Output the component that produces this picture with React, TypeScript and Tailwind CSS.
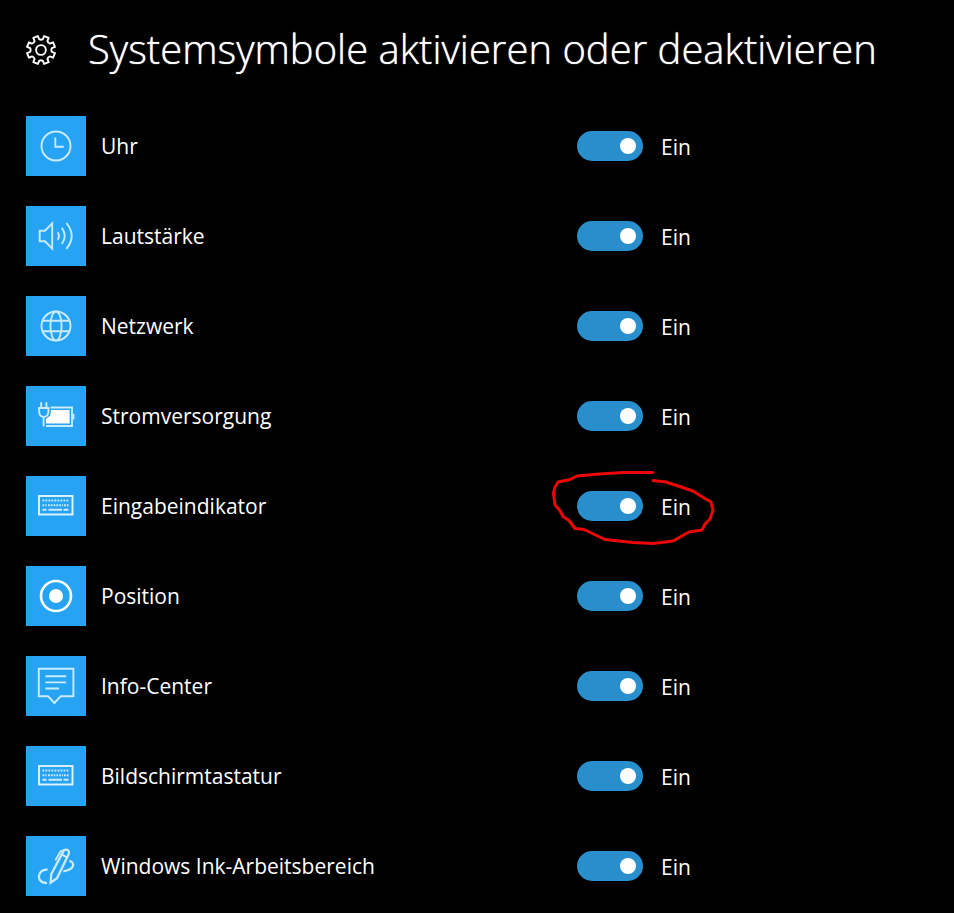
import React, { useState } from "react";

type IconProps = {
  children: React.ReactNode;
};

type SystemIcon = {
  id: string;
  label: string;
  icon: React.ReactNode;
  marked?: boolean;
};

// All tile icons share a 60x60 canvas
function TileIcon({ children }: IconProps) {
  return (
    <svg
      viewBox="0 0 60 60"
      className="size-full"
      fill="none"
      stroke="#c9ebff"
      strokeWidth="1.9"
      aria-hidden="true"
    >
      {children}
    </svg>
  );
}

function GearIcon() {
  // 8 teeth, the first one half a step away from the top
  const points: string[] = [];
  const polar = (radius: number, deg: number) => {
    const rad = ((deg - 90) * Math.PI) / 180;
    const x = 15 + radius * Math.cos(rad);
    const y = 15 + radius * Math.sin(rad);
    return `${x.toFixed(2)} ${y.toFixed(2)}`;
  };
  for (let i = 0; i < 8; i++) {
    const a = 22.5 + i * 45;
    points.push(
      `${i === 0 ? "M" : "L"}${polar(11, a - 13)}`,
      `L${polar(14.3, a - 10)}`,
      `L${polar(14.3, a + 10)}`,
      `L${polar(11, a + 13)}`,
      `Q${polar(9.8, a + 22.5)} ${polar(11, a + 32)}`,
    );
  }

  return (
    <svg
      viewBox="0 0 30 30"
      className="size-[30px] shrink-0"
      fill="none"
      stroke="#fff"
      strokeWidth="1.9"
      strokeLinejoin="round"
      aria-hidden="true"
    >
      <path d={`${points.join(" ")}Z`} />
      <circle cx="15" cy="15" r="4.9" />
    </svg>
  );
}

function ClockIcon() {
  return (
    <TileIcon>
      <circle cx="30" cy="30" r="14.5" />
      <path d="M29.3 21.5V30.7H37.8" />
    </TileIcon>
  );
}

function VolumeIcon() {
  return (
    <TileIcon>
      <path d="M13.7 24.7H19L26.2 17.3V42.6L19 35.3H13.7Z" />
      <path d="M31.6 26.2Q34.4 29.9 31.6 33.6" />
      <path d="M35.8 21.8Q41.6 29.9 35.8 38" />
      <path d="M40.4 17Q51 29.9 40.4 42.8" />
    </TileIcon>
  );
}

function GlobeIcon() {
  return (
    <TileIcon>
      <circle cx="30" cy="30" r="14.5" />
      <ellipse cx="30" cy="30" rx="5.6" ry="14.5" />
      <path d="M17 24.7H43M17 35.3H43" />
    </TileIcon>
  );
}

function PowerIcon() {
  return (
    <TileIcon>
      <path d="M24.5 21.5H46V40H20" />
      <path d="M47.4 28V33.5" strokeWidth="2" />
      <path
        d="M25 24H43.6V37.4H20V33L24.3 29.5Z"
        fill="#fff"
        stroke="none"
      />
      <path d="M15.2 16.3V21.5M20.4 16.3V21.5M12.3 22H23.3" />
      <path d="M13.2 22V26Q13.4 30.6 17.7 30.9Q22.2 30.6 22.4 26V22" />
      <path d="M17.6 31V40.5" />
    </TileIcon>
  );
}

function KeyboardIcon() {
  return (
    <TileIcon>
      <rect x="13" y="20" width="33.5" height="18.5" stroke="#dff3ff" />
      <path d="M16.5 24.5H42.5" strokeDasharray="1.8 1.2" />
      <path d="M16.5 29.2H20.5M22 29.2H37M38 29.2H42.5" strokeDasharray="1.8 1" />
      <path d="M16.5 33.7H20.5M22.5 33.7H36M37.5 33.7H42.5" />
    </TileIcon>
  );
}

function PositionIcon() {
  return (
    <TileIcon>
      <circle cx="30" cy="30" r="15" stroke="#fff" strokeWidth="2.6" />
      <circle cx="30" cy="30" r="7" fill="#fff" stroke="none" />
    </TileIcon>
  );
}

function MessageIcon() {
  return (
    <TileIcon>
      <path d="M12.8 12.7H47.4V40.2H34.8L28.4 47L22 40.2H12.8Z" />
      <path d="M19.5 20.2H40.2M19.5 26.4H40.2M19.5 32.5H33" />
    </TileIcon>
  );
}

function InkIcon() {
  return (
    <TileIcon>
      <path d="M21.6 33.6C16 33.2 12.8 37 12.9 40.7C13 44.8 16.5 47.3 21 46.8" strokeWidth="2.3" />
      <path d="M24.7 46.6L25.2 38.2L36.8 16.4C38.6 11.8 44.6 13.6 42.6 18.2L31 42.2Z" strokeWidth="2.3" />
      <path d="M29.3 24.4L34.6 15.2L38.3 14.2M36 18.6L40.8 21.4" />
      <path d="M43.3 24.8C46.6 25.5 48 28 46.7 30.6C45.2 33.6 41.5 34.7 37.3 35.3" strokeWidth="2.3" />
    </TileIcon>
  );
}

const SYSTEM_ICONS: SystemIcon[] = [
  { id: "clock", label: "Uhr", icon: <ClockIcon /> },
  { id: "volume", label: "Lautstärke", icon: <VolumeIcon /> },
  { id: "network", label: "Netzwerk", icon: <GlobeIcon /> },
  { id: "power", label: "Stromversorgung", icon: <PowerIcon /> },
  {
    id: "input",
    label: "Eingabeindikator",
    icon: <KeyboardIcon />,
    marked: true,
  },
  { id: "location", label: "Position", icon: <PositionIcon /> },
  { id: "action-center", label: "Info-Center", icon: <MessageIcon /> },
  { id: "touch-keyboard", label: "Bildschirmtastatur", icon: <KeyboardIcon /> },
  { id: "ink", label: "Windows Ink-Arbeitsbereich", icon: <InkIcon /> },
];

// Hand-drawn red pen stroke around a switch
function PenMark() {
  return (
    <svg
      viewBox="0 0 170 80"
      className="pointer-events-none absolute -top-6 -left-7 h-20 w-[170px]"
      fill="none"
      stroke="#ee0606"
      strokeWidth="3"
      strokeLinecap="round"
      strokeLinejoin="round"
      aria-hidden="true"
    >
      <path d="M104 5.500H75L50 7L28 9L21 12.500L9 15L6 20L4.500 26L6 38L11 43.500L14 49.500L20 53.500L26 61.500L35 62.500L56 72.500L84 75.500L104 76.500L124 74L140 65L153 63L156 57L161 52L164 43L162 35L155 31L144 24L129 19L117 15L104 13.500" />
    </svg>
  );
}

export default function App() {
  const [enabled, setEnabled] = useState<Record<string, boolean>>(
    Object.fromEntries(SYSTEM_ICONS.map((item) => [item.id, true])),
  );

  const handleToggle = (id: string) =>
    setEnabled((prev) => ({ ...prev, [id]: !prev[id] }));

  return (
    <main className="min-h-screen bg-black px-[26px] pt-5 pb-4 font-['Open_Sans',sans-serif] text-white">
      <header className="flex h-[60px] items-center gap-8">
        <GearIcon />
        <h1 className="pb-0.5 text-[40px] leading-[60px] font-light whitespace-nowrap [text-shadow:0_0_1px_#fff]">
          Systemsymbole aktivieren oder deaktivieren
        </h1>
      </header>

      <ul className="mt-9 flex flex-col gap-[30px]">
        {SYSTEM_ICONS.map((item) => (
          <li key={item.id} className="flex items-center gap-[15px]">
            <div className="size-[60px] shrink-0 bg-[#27a3f3]">{item.icon}</div>
            <label
              htmlFor={item.id}
              className="max-w-[461px] flex-1 text-[21px] leading-[30px]"
            >
              {item.label}
            </label>
            <div className="relative flex h-[30px] items-center gap-[18px]">
              <input
                id={item.id}
                type="checkbox"
                role="switch"
                checked={enabled[item.id]}
                onChange={() => handleToggle(item.id)}
                className="flex h-[30px] w-[66px] appearance-none items-center rounded-full border-2 border-white px-[5px] before:size-4 before:rounded-full before:bg-white checked:justify-end checked:border-[#298fcc] checked:bg-[#298fcc]"
              />
              <span className="pt-0.5 text-[21px] leading-[30px]">
                {enabled[item.id] ? "Ein" : "Aus"}
              </span>
              {item.marked && <PenMark />}
            </div>
          </li>
        ))}
      </ul>
    </main>
  );
}
